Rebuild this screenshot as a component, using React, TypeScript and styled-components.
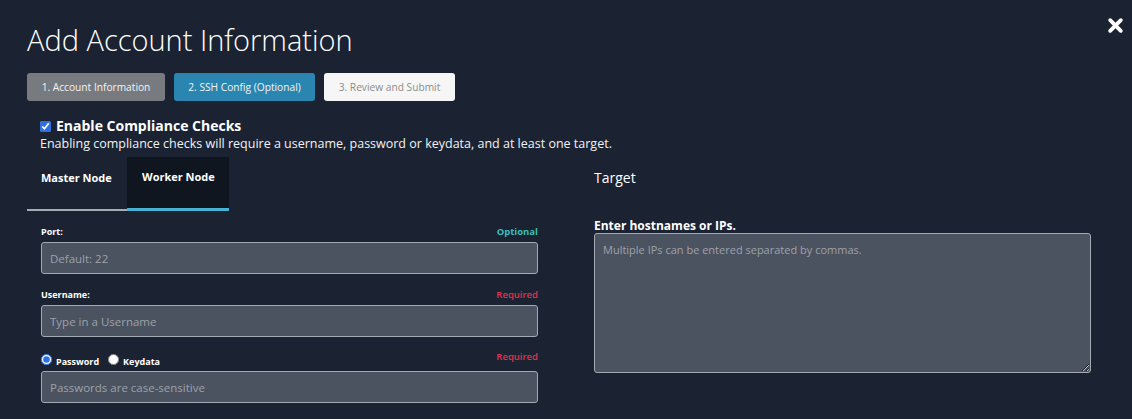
import React from "react";
import styled, { createGlobalStyle } from "styled-components";

const Global = createGlobalStyle`
  html, body { margin: 0; padding: 0; background: #1b2332; }
  body { font-family: "Open Sans", "Noto Sans", sans-serif; color: #ffffff; }
  * { box-sizing: border-box; }
`;

const Page = styled.div`
  position: relative;
  width: 1132px;
  height: 419px;
  overflow: hidden;
  background: #1b2332;
  padding: 20px 41px 0 27px;
`;

const Close = styled.button`
  position: absolute;
  top: 16px;
  right: 8px;
  width: 18px;
  height: 18px;
  padding: 0;
  border: 0;
  background: transparent;
  cursor: pointer;
  display: flex;
  align-items: center;
  justify-content: center;
`;

const Title = styled.h1`
  margin: 0;
  font-size: 29px;
  font-weight: 300;
  line-height: 40px;
  color: #ffffff;
  white-space: nowrap;
`;

const Steps = styled.div`
  display: flex;
  gap: 9px;
  margin-top: 13px;
`;

const Step = styled.div<{ $variant: "done" | "active" | "todo" }>`
  height: 28px;
  border-radius: 3px;
  display: flex;
  align-items: center;
  justify-content: center;
  white-space: nowrap;
  font-size: 10.2px;
  background: ${(p) =>
    p.$variant === "done" ? "#777a7e" : p.$variant === "active" ? "#2a86b1" : "#f6f6f6"};
  color: ${(p) => (p.$variant === "todo" ? "#8c8c8c" : "#f4f4f4")};
  width: ${(p) => (p.$variant === "done" ? 138 : p.$variant === "active" ? 141 : 131)}px;
`;

const Compliance = styled.div`
  padding-left: 13px;
  margin-top: 16px;
`;

const CheckRow = styled.label`
  display: flex;
  align-items: center;
  gap: 5px;
  font-size: 14px;
  font-weight: 700;
  line-height: 18px;
  white-space: nowrap;
`;

const Check = styled.input`
  margin: 0;
  width: 11px;
  height: 11px;
  accent-color: #2f6fe0;
`;

const Description = styled.div`
  font-size: 12.5px;
  line-height: 18px;
  color: #f2f2f2;
  white-space: nowrap;
`;

const Columns = styled.div`
  display: grid;
  grid-template-columns: 511px 497px;
  column-gap: 56px;
  margin-top: 4px;
`;

const TabBar = styled.div`
  display: flex;
  height: 54px;
`;

const Tab = styled.div<{ $active?: boolean }>`
  height: 54px;
  display: flex;
  align-items: flex-start;
  white-space: nowrap;
  padding: ${(p) => (p.$active ? "11px 0 0 15px" : "12px 0 0 14px")};
  line-height: 17px;
  font-size: 11px;
  font-weight: 700;
  color: #ffffff;
  background: ${(p) => (p.$active ? "#10161f" : "transparent")};
  border-bottom: ${(p) => (p.$active ? "3px solid #48b2d6" : "2px solid #a6acb3")};
  width: ${(p) => (p.$active ? 102 : 100)}px;
`;

const Form = styled.div`
  padding-left: 14px;
  display: flex;
  flex-direction: column;
  margin-top: 13px;
`;

const Field = styled.div`
  display: flex;
  flex-direction: column;
  margin-bottom: 13px;
`;

const LabelRow = styled.div<{ $tall?: boolean }>`
  display: flex;
  justify-content: space-between;
  align-items: flex-end;
  height: ${(p) => (p.$tall ? 17 : 14)}px;
  margin-bottom: 4px;
`;

const Label = styled.label`
  font-size: 9px;
  font-weight: 700;
  color: #ffffff;
  display: flex;
  align-items: center;
  gap: 3px;
  white-space: nowrap;
`;

const Hint = styled.span<{ $kind: "optional" | "required"; $raised?: boolean }>`
  font-size: 9.5px;
  font-weight: ${(p) => (p.$kind === "optional" ? 700 : 600)};
  color: ${(p) => (p.$kind === "optional" ? "#3fbcb8" : "#e1324f")};
  align-self: ${(p) => (p.$raised ? "flex-start" : "auto")};
`;

const Input = styled.input`
  width: 100%;
  height: 32px;
  border: 1px solid #a3aab3;
  border-radius: 3px;
  background: #4b5260;
  padding: 0 8px;
  font-family: "Open Sans", sans-serif;
  font-size: 11.5px;
  color: #ffffff;
  outline: none;
  &::placeholder { color: #9da2aa; }
`;

const Radio = styled.input`
  margin: 0 1px 0 0;
  width: 11px;
  height: 11px;
  accent-color: #2f6fe0;
  position: relative;
  top: -2px;
`;

const RadioGroup = styled.div`
  display: flex;
  align-items: center;
  gap: 9px;
  position: relative;
  top: 1px;
`;

const Right = styled.div`
  display: flex;
  flex-direction: column;
`;

const SectionTitle = styled.div`
  font-size: 14px;
  line-height: 20px;
  margin-top: 11px;
  color: #ffffff;
`;

const TargetLabel = styled.label`
  font-size: 12px;
  font-weight: 700;
  margin-top: 31px;
  line-height: 14px;
`;

const TextArea = styled.textarea`
  width: 100%;
  height: 140px;
  border: 1px solid #a3aab3;
  border-radius: 3px;
  background: #4b5260;
  padding: 8px;
  font-family: "Open Sans", sans-serif;
  font-size: 11px;
  color: #ffffff;
  outline: none;
  resize: vertical;
  &::placeholder { color: #9da2aa; }
`;

export default function App() {
  return (
    <>
      <Global />
      <Page>
        <Close aria-label="Close">
          <svg width="17" height="17" viewBox="0 0 16 16">
            <path
              d="M3 3 L13 13 M13 3 L3 13"
              stroke="#ffffff"
              strokeWidth="3.6"
              strokeLinecap="round"
            />
          </svg>
        </Close>
        <Title>Add Account Information</Title>
        <Steps>
          <Step $variant="done">1. Account Information</Step>
          <Step $variant="active">2. SSH Config (Optional)</Step>
          <Step $variant="todo">3. Review and Submit</Step>
        </Steps>
        <Compliance>
          <CheckRow>
            <Check type="checkbox" defaultChecked />
            Enable Compliance Checks
          </CheckRow>
          <Description>
            Enabling compliance checks will require a username, password or keydata, and at least one target.
          </Description>
        </Compliance>
        <Columns>
          <div>
            <TabBar>
              <Tab>Master Node</Tab>
              <Tab $active>Worker Node</Tab>
            </TabBar>
            <Form>
              <Field>
                <LabelRow>
                  <Label>Port:</Label>
                  <Hint $kind="optional">Optional</Hint>
                </LabelRow>
                <Input placeholder="Default: 22" />
              </Field>
              <Field>
                <LabelRow>
                  <Label>Username:</Label>
                  <Hint $kind="required">Required</Hint>
                </LabelRow>
                <Input placeholder="Type in a Username" />
              </Field>
              <Field>
                <LabelRow $tall>
                  <RadioGroup>
                    <Label>
                      <Radio type="radio" name="auth" defaultChecked />
                      Password
                    </Label>
                    <Label>
                      <Radio type="radio" name="auth" />
                      Keydata
                    </Label>
                  </RadioGroup>
                  <Hint $kind="required" $raised>Required</Hint>
                </LabelRow>
                <Input type="password" placeholder="Passwords are case-sensitive" />
              </Field>
            </Form>
          </div>
          <Right>
            <SectionTitle>Target</SectionTitle>
            <TargetLabel>Enter hostnames or IPs.</TargetLabel>
            <TextArea placeholder="Multiple IPs can be entered separated by commas." />
          </Right>
        </Columns>
      </Page>
    </>
  );
}
